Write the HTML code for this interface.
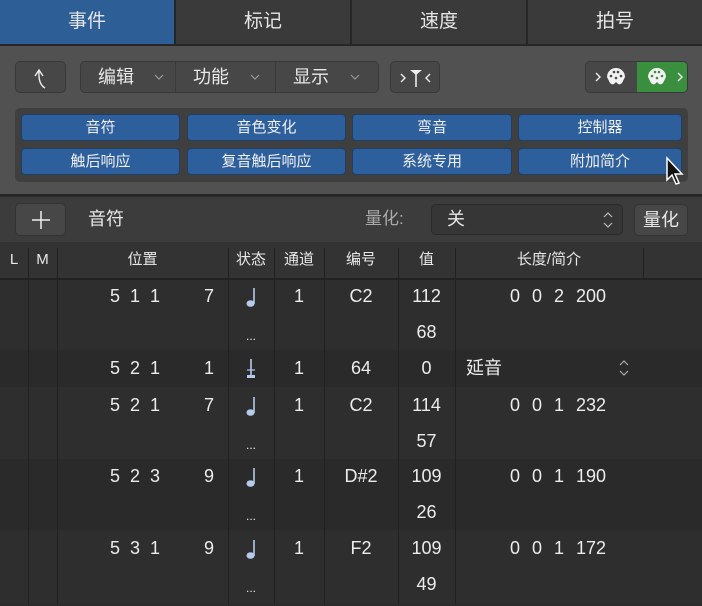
<!DOCTYPE html>
<html><head><meta charset="utf-8"><style>
*{box-sizing:border-box;margin:0;padding:0}
body{width:702px;height:604px;background:#2b2b2b;font-family:"Liberation Sans","Noto Sans CJK SC",sans-serif;color:#e8e8e8;position:relative;overflow:hidden}
.a{position:absolute}
.tab{top:0;height:46px;background:#3a3a3a;border-right:2px solid #262626;border-bottom:2px solid #262626;font-size:19px;text-align:center;line-height:44px;color:#e6e6e6}
.btn{background:#474747;border:1px solid #383838;border-radius:5px;height:32px;top:61px}
.bb{background:#2c5f9c;border:1px solid #1f3f66;border-radius:4px;height:27px;font-size:15px;text-align:center;line-height:25px;color:#f0f0f0}
.hdr{top:242px;height:38px;background:#333;font-size:15px;line-height:36px;text-align:center;border-bottom:2px solid #222}
.vl{width:1px;background:#202020}
.t{font-size:18px;color:#ececec;line-height:36px}
.c{text-align:center}
.note{left:228px;width:46px;height:36px}
</style></head><body>
<div class="a tab" style="left:0;width:176px;background:#2e5e96">事件</div>
<div class="a tab" style="left:176px;width:176px">标记</div>
<div class="a tab" style="left:352px;width:176px">速度</div>
<div class="a tab" style="left:528px;width:174px;border-right:none">拍号</div>
<div class="a" style="left:0;top:46px;width:702px;height:150px;background:#515151;border-bottom:2px solid #242424"></div>
<div class="a btn" style="left:15px;width:51px"><svg width="51" height="32"><path d="M29 26 Q22 22 23 9 M19 14 L23 8 L27 14" stroke="#eee" stroke-width="1.4" fill="none"/></svg></div>
<div class="a btn" style="left:80px;width:299px;font-size:18px;line-height:30px">
<span class="a" style="left:17px">编辑</span>
<span class="a vl" style="left:94px;top:0;height:30px;background:#3a3a3a"></span>
<span class="a" style="left:112px">功能</span>
<span class="a vl" style="left:194px;top:0;height:30px;background:#3a3a3a"></span>
<span class="a" style="left:212px">显示</span>
<svg class="a" style="left:0;top:0" width="299" height="30"><path d="M74 13 L78 17 L82 13 M170 13 L174 17 L178 13 M270 13 L274 17 L278 13" stroke="#999" stroke-width="1.2" fill="none"/></svg></div>
<div class="a btn" style="left:390px;width:50px"><svg width="50" height="32"><path d="M10 12 L14 16 L10 20 M39 12 L35 16 L39 20" stroke="#eee" stroke-width="1.4" fill="none"/><path d="M25 11 V25" stroke="#eee" stroke-width="1.6"/><path d="M19 8 L31 8 L25 13Z" fill="#eee"/></svg></div>
<div class="a btn" style="left:585px;width:103px;overflow:hidden"><div class="a" style="left:51px;top:0;width:52px;height:30px;background:#3a8f3e"></div>
<svg class="a" width="103" height="32" style="left:0;top:-1px"><path d="M10 12 L14 16 L10 20 M92 12 L96 16 L92 20" stroke="#eee" stroke-width="1.4" fill="none"/>
<path d="M21 16 A9 9 0 1 1 39 16 L36 22 Q34 24 32 23 L30 21 L28 23 Q26 24 24 22Z" fill="#f2f2f2"/>
<path d="M62 16 A9 9 0 1 1 80 16 L77 22 Q75 24 73 23 L71 21 L69 23 Q67 24 65 22Z" fill="#f2f2f2"/>
<g fill="#474747"><circle cx="25" cy="15" r="1.3"/><circle cx="28" cy="11" r="1.3"/><circle cx="32" cy="11" r="1.3"/><circle cx="35" cy="15" r="1.3"/><circle cx="30" cy="17" r="1.3"/></g>
<g fill="#3a8f3e"><circle cx="66" cy="15" r="1.3"/><circle cx="69" cy="11" r="1.3"/><circle cx="73" cy="11" r="1.3"/><circle cx="76" cy="15" r="1.3"/><circle cx="71" cy="17" r="1.3"/></g></svg></div>
<div class="a" style="left:15px;top:108px;width:673px;height:74px;background:#3f3f3f;border-radius:5px"></div>
<div class="a bb" style="left:21px;top:114px;width:159px">音符</div>
<div class="a bb" style="left:187px;top:114px;width:159px">音色变化</div>
<div class="a bb" style="left:352px;top:114px;width:160px">弯音</div>
<div class="a bb" style="left:518px;top:114px;width:164px">控制器</div>
<div class="a bb" style="left:21px;top:148px;width:159px">触后响应</div>
<div class="a bb" style="left:187px;top:148px;width:159px">复音触后响应</div>
<div class="a bb" style="left:352px;top:148px;width:160px">系统专用</div>
<div class="a bb" style="left:518px;top:148px;width:164px">附加简介</div>
<svg class="a" style="left:664px;top:156px" width="24" height="32"><path d="M3 2 L3 24 L8 19 L12 28 L15 27 L11 18 L18 18Z" fill="#111" stroke="#fff" stroke-width="1.5"/></svg>
<div class="a" style="left:0;top:197px;width:702px;height:45px;background:#3c3c3c"></div>
<div class="a" style="left:15px;top:203px;width:51px;height:33px;background:#474747;border:1px solid #333;border-radius:5px"><svg width="49" height="31"><path d="M25 7 V25 M16 16 H34" stroke="#eee" stroke-width="1.5"/></svg></div>
<div class="a" style="left:88px;top:206px;font-size:18px;line-height:26px">音符</div>
<div class="a" style="left:365px;top:206px;font-size:17px;line-height:26px;color:#aaa">量化:</div>
<div class="a" style="left:431px;top:204px;width:192px;height:31px;background:#363636;border:1px solid #2b2b2b;border-radius:5px;font-size:18px;line-height:29px;padding-left:15px">关<svg class="a" style="right:8px;top:6px" width="12" height="18"><path d="M2 6 L6 2 L10 6 M2 12 L6 16 L10 12" stroke="#bbb" stroke-width="1.2" fill="none"/></svg></div>
<div class="a" style="left:634px;top:204px;width:54px;height:32px;background:#474747;border:1px solid #333;border-radius:5px;font-size:18px;line-height:30px;text-align:center">量化</div>
<div class="a hdr" style="left:0;width:702px"></div>
<div class="a hdr" style="left:0;width:28px;background:none;border:none">L</div>
<div class="a hdr" style="left:28px;width:29px;background:none;border:none">M</div>
<div class="a hdr" style="left:57px;width:171px;background:none;border:none">位置</div>
<div class="a hdr" style="left:228px;width:46px;background:none;border:none">状态</div>
<div class="a hdr" style="left:274px;width:50px;background:none;border:none">通道</div>
<div class="a hdr" style="left:324px;width:74px;background:none;border:none">编号</div>
<div class="a hdr" style="left:398px;width:57px;background:none;border:none">值</div>
<div class="a hdr" style="left:455px;width:188px;background:none;border:none">长度/简介</div>
<div class="a" style="left:0;top:280px;width:702px;height:70px;background:#2e2e2e"></div>
<div class="a" style="left:0;top:350px;width:702px;height:37px;background:#2a2a2a"></div>
<div class="a" style="left:0;top:387px;width:702px;height:72px;background:#2e2e2e"></div>
<div class="a" style="left:0;top:459px;width:702px;height:71px;background:#2a2a2a"></div>
<div class="a" style="left:0;top:530px;width:702px;height:74px;background:#2e2e2e"></div>
<div class="a vl" style="left:28px;top:248px;height:356px"></div>
<div class="a vl" style="left:57px;top:248px;height:356px"></div>
<div class="a vl" style="left:228px;top:248px;height:356px"></div>
<div class="a vl" style="left:274px;top:248px;height:356px"></div>
<div class="a vl" style="left:324px;top:248px;height:356px"></div>
<div class="a vl" style="left:398px;top:248px;height:356px"></div>
<div class="a vl" style="left:455px;top:248px;height:356px"></div>
<div class="a vl" style="left:643px;top:248px;height:30px"></div>

<!-- rows -->
<div class="a t" style="left:110px;top:278px">5&nbsp;&nbsp;1&nbsp;&nbsp;1</div><div class="a t" style="left:204px;top:278px">7</div>
<svg class="a note" style="top:278px"><path d="M26 10 V26" stroke="#b4cbec" stroke-width="1.6"/><ellipse cx="22.5" cy="25.5" rx="4" ry="3.3" fill="#b4cbec"/></svg>
<div class="a t c" style="left:274px;width:50px;top:278px">1</div>
<div class="a t c" style="left:324px;width:74px;top:278px">C2</div><div class="a t c" style="left:398px;width:57px;top:278px">112</div>
<div class="a t" style="left:510px;top:278px;word-spacing:1px">0&nbsp;&nbsp;0&nbsp;&nbsp;2&nbsp;&nbsp;200</div>
<div class="a t c" style="left:228px;width:46px;top:318px;font-size:12px">...</div><div class="a t c" style="left:398px;width:57px;top:314px">68</div>

<div class="a t" style="left:110px;top:350px">5&nbsp;&nbsp;2&nbsp;&nbsp;1</div><div class="a t" style="left:204px;top:350px">1</div>
<svg class="a note" style="top:350px"><path d="M23 9 V25" stroke="#b4cbec" stroke-width="1.6"/><path d="M19 20 H27" stroke="#b4cbec" stroke-width="1.2"/><rect x="19" y="25" width="8" height="3" fill="#b4cbec"/></svg>
<div class="a t c" style="left:274px;width:50px;top:350px">1</div>
<div class="a t c" style="left:324px;width:74px;top:350px">64</div><div class="a t c" style="left:398px;width:57px;top:350px">0</div>
<div class="a t" style="left:466px;top:350px">延音</div><svg class="a" style="left:618px;top:359px" width="12" height="18"><path d="M2 6 L6 2 L10 6 M2 12 L6 16 L10 12" stroke="#aaa" stroke-width="1.2" fill="none"/></svg>

<div class="a t" style="left:110px;top:387px">5&nbsp;&nbsp;2&nbsp;&nbsp;1</div><div class="a t" style="left:204px;top:387px">7</div>
<svg class="a note" style="top:387px"><path d="M26 10 V26" stroke="#b4cbec" stroke-width="1.6"/><ellipse cx="22.5" cy="25.5" rx="4" ry="3.3" fill="#b4cbec"/></svg>
<div class="a t c" style="left:274px;width:50px;top:387px">1</div>
<div class="a t c" style="left:324px;width:74px;top:387px">C2</div><div class="a t c" style="left:398px;width:57px;top:387px">114</div>
<div class="a t" style="left:510px;top:387px;word-spacing:1px">0&nbsp;&nbsp;0&nbsp;&nbsp;1&nbsp;&nbsp;232</div>
<div class="a t c" style="left:228px;width:46px;top:427px;font-size:12px">...</div><div class="a t c" style="left:398px;width:57px;top:423px">57</div>

<div class="a t" style="left:110px;top:458px">5&nbsp;&nbsp;2&nbsp;&nbsp;3</div><div class="a t" style="left:204px;top:458px">9</div>
<svg class="a note" style="top:458px"><path d="M26 10 V26" stroke="#b4cbec" stroke-width="1.6"/><ellipse cx="22.5" cy="25.5" rx="4" ry="3.3" fill="#b4cbec"/></svg>
<div class="a t c" style="left:274px;width:50px;top:458px">1</div>
<div class="a t c" style="left:324px;width:74px;top:458px">D#2</div><div class="a t c" style="left:398px;width:57px;top:458px">109</div>
<div class="a t" style="left:510px;top:458px;word-spacing:1px">0&nbsp;&nbsp;0&nbsp;&nbsp;1&nbsp;&nbsp;190</div>
<div class="a t c" style="left:228px;width:46px;top:498px;font-size:12px">...</div><div class="a t c" style="left:398px;width:57px;top:494px">26</div>

<div class="a t" style="left:110px;top:530px">5&nbsp;&nbsp;3&nbsp;&nbsp;1</div><div class="a t" style="left:204px;top:530px">9</div>
<svg class="a note" style="top:530px"><path d="M26 10 V26" stroke="#b4cbec" stroke-width="1.6"/><ellipse cx="22.5" cy="25.5" rx="4" ry="3.3" fill="#b4cbec"/></svg>
<div class="a t c" style="left:274px;width:50px;top:530px">1</div>
<div class="a t c" style="left:324px;width:74px;top:530px">F2</div><div class="a t c" style="left:398px;width:57px;top:530px">109</div>
<div class="a t" style="left:510px;top:530px;word-spacing:1px">0&nbsp;&nbsp;0&nbsp;&nbsp;1&nbsp;&nbsp;172</div>
<div class="a t c" style="left:228px;width:46px;top:570px;font-size:12px">...</div><div class="a t c" style="left:398px;width:57px;top:566px">49</div>
</body></html>
